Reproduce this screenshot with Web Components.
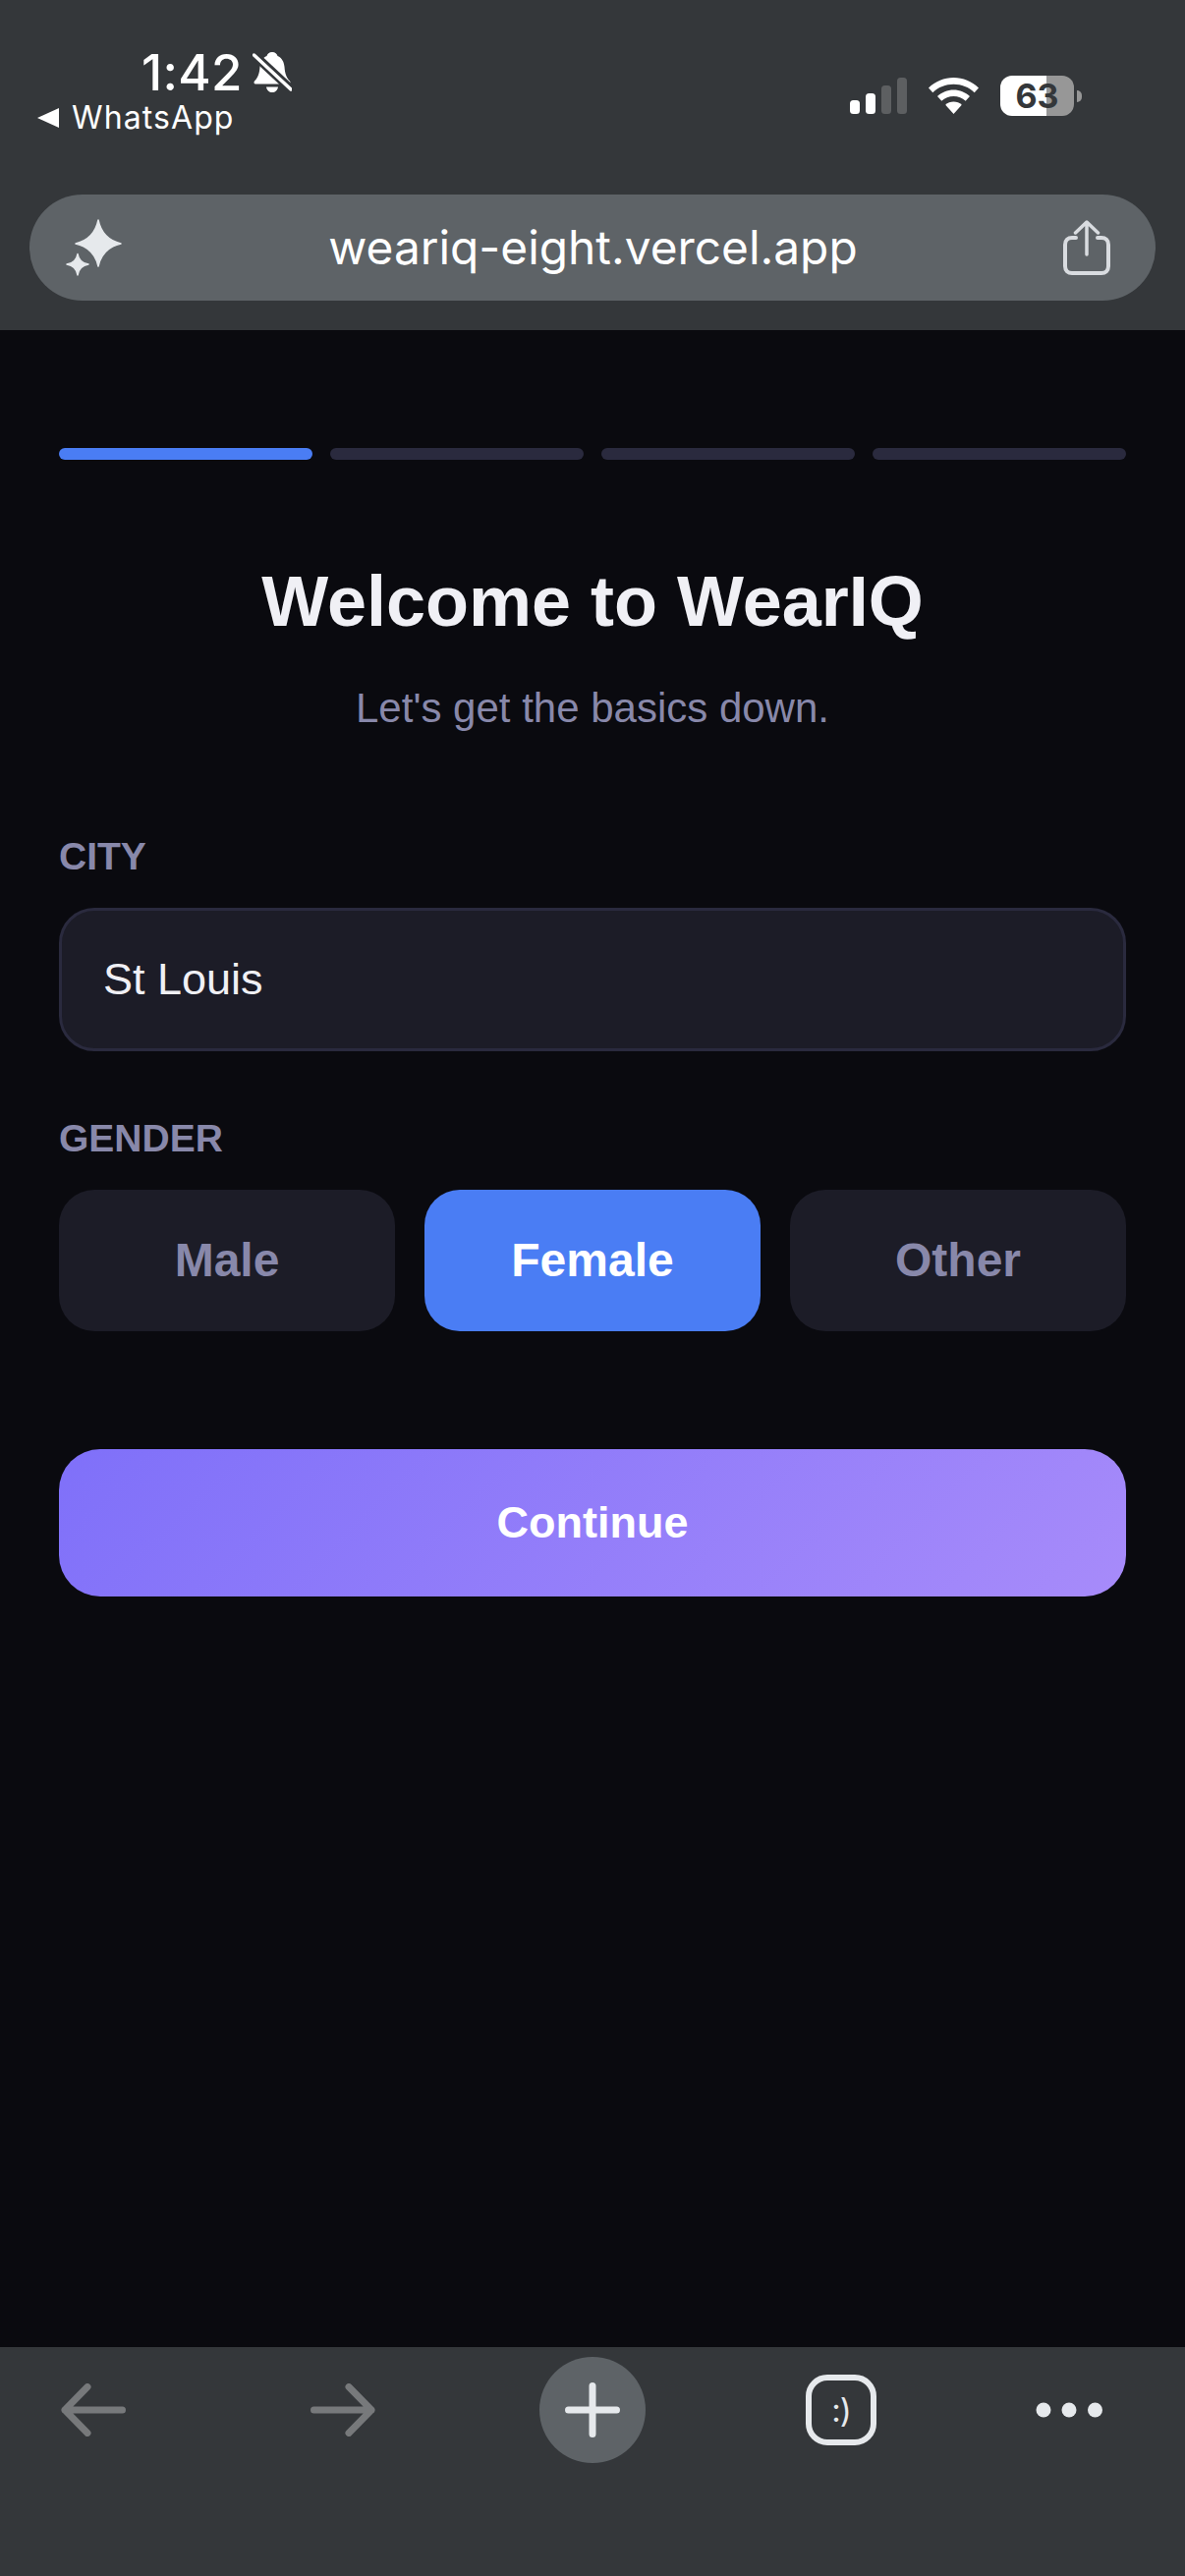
<!DOCTYPE html>
<html lang="en">
<head>
<meta charset="utf-8">
<title>WearIQ</title>
<style>
    html, body { margin: 0; background: #0a0a0f; }
    body { width: 1206px; height: 2622px; overflow: hidden; display: flex; flex-direction: column; font-family: "Liberation Sans", Arial, sans-serif; }
    main-page { flex: 1; }
</style>
</head>
<body>
<status-bar></status-bar>
<url-bar>weariq-eight.vercel.app</url-bar>
<main-page>
    <step-progress></step-progress>
    <page-heading subtitle="Let's get the basics down.">Welcome to WearIQ</page-heading>
    <form-field label="CITY"><text-box>St Louis</text-box></form-field>
    <form-field label="GENDER">
        <choice-row>
            <choice-button>Male</choice-button>
            <choice-button selected>Female</choice-button>
            <choice-button>Other</choice-button>
        </choice-row>
    </form-field>
    <primary-button>Continue</primary-button>
</main-page>
<browser-toolbar></browser-toolbar>
<script>
/**
 * Register a custom element with its markup and styles in an open shadow root.
 *
 * @param {string} name - Element name.
 * @param {string} styleText - Contents of the shadow root's style tag.
 * @param {string|function(HTMLElement): string} templateHtml - Markup, or a function of the host.
 */
function component(name, styleText, templateHtml) {
    customElements.define(name, class extends HTMLElement {
        constructor() {
            super();
            this.attachShadow({ mode: 'open' });
        }
        connectedCallback() {
            const html = typeof templateHtml === 'function' ? templateHtml(this) : templateHtml;
            this.shadowRoot.innerHTML = `<style>${styleText}</style>${html}`;
        }
    });
}

component('status-bar', `
    :host { display: flex; justify-content: space-between; height: 198px; background: #34373a; color: #fff; font-family: Inter, "Liberation Sans", sans-serif; }
    .left { padding: 45px 0 0 38px; }
    .time { display: flex; align-items: center; gap: 10px; padding-left: 106px; height: 58px; font-size: 51px; font-weight: 500; letter-spacing: .3px; line-height: 58px; }
    .app { display: flex; align-items: center; gap: 13px; height: 34px; font-size: 32px; letter-spacing: 1.1px; line-height: 34px; }
    .right { display: flex; align-items: center; gap: 22px; height: 41px; padding: 77px 105px 0 0; }
    svg { display: block; }
    .battery { display: flex; align-items: center; gap: 3px; }
    .cell { width: 75px; height: 41px; border-radius: 12px; background: linear-gradient(90deg, #fff 47px, #979797 47px); color: #34373a; font-size: 34px; font-weight: 700; line-height: 41px; text-align: center; }
    .nub { width: 5px; height: 12px; border-radius: 0 6px 6px 0; background: #979797; }
`, `
    <div class="left">
        <div class="time">1:42
            <svg width="40" height="42" viewBox="0 0 40 42" fill="#fff">
                <path d="M20 0c3 0 5 2 5.500 4 4.500 2 6.500 6 7 11 .5 7 2 11 5.500 14.500 1 1.500.5 3-1 3H3c-1.500 0-2-1.500-1-3 3.500-3.500 5-7.500 5.500-14.500.5-5 2.500-9 7-11C15 2 17 0 20 0z"/>
                <path d="M14 35.500h12c-.5 3.500-3 5.500-6 5.500s-5.500-2-6-5.500z"/>
                <path d="M-2 -.500 41 39.500" stroke="#34373a" stroke-width="9" fill="none"/>
                <path d="M1.500 3 39 38" stroke="#fff" stroke-width="3.500" stroke-linecap="round" fill="none"/>
            </svg>
        </div>
        <div class="app">
            <svg width="22" height="20" viewBox="0 0 22 20" fill="#fff"><path d="M0 10 22 0v20z"/></svg>
            <span>WhatsApp</span>
        </div>
    </div>
    <div class="right">
        <svg width="58" height="37" viewBox="0 0 58 37">
            <rect x="0" y="23" width="10" height="14" rx="3.500" fill="#fff"/>
            <rect x="16" y="16" width="10" height="21" rx="3.500" fill="#fff"/>
            <rect x="32" y="8" width="10" height="29" rx="3.500" fill="#5d5f61"/>
            <rect x="48" y="0" width="10" height="37" rx="3.500" fill="#5d5f61"/>
        </svg>
        <svg width="51" height="37" viewBox="0 0 51 37" fill="#fff">
            <path d="M25.500 0C35 0 44 3.800 51 10.500l-4.300 4.700C41 9.800 33.500 6.800 25.500 6.800S10 9.800 4.300 15.200L0 10.500C7 3.800 16 0 25.500 0z"/>
            <path d="M25.500 12.500c6.300 0 12 2.400 16.500 6.500l-4.300 4.700c-3.300-3-7.600-4.700-12.200-4.700s-8.900 1.700-12.200 4.700L9 19c4.500-4.100 10.200-6.500 16.500-6.500z"/>
            <path d="M25.500 24.500c3.200 0 6.100 1.200 8.300 3.200L25.500 37l-8.300-9.300c2.200-2 5.100-3.200 8.300-3.200z"/>
        </svg>
        <div class="battery"><div class="cell">63</div><div class="nub"></div></div>
    </div>
`);

component('url-bar', `
    :host { display: block; background: #34373a; padding: 0 30px 30px; }
    .pill { display: flex; align-items: center; justify-content: space-between; height: 108px; padding: 0 46px 0 37px; border-radius: 54px; background: #5e6367; }
    .url { color: #fff; font-family: Inter, "Liberation Sans", sans-serif; font-size: 47.8px; line-height: 108px; }
    svg { display: block; }
`, `
    <div class="pill">
        <svg width="58" height="58" viewBox="0 0 58 58" fill="#e6e9ec" stroke="#e6e9ec" stroke-width="1.500" stroke-linejoin="round">
            <path d="M33 1Q37 20.500 56 25 37 29.500 33 48 29 29.500 10 25 29 20.500 33 1z"/>
            <path d="M12 35.500Q13.500 44.500 23 46 13.500 47.500 12 57 10.500 47.500 1 46 10.500 44.500 12 35.500z"/>
        </svg>
        <span class="url"><slot></slot></span>
        <svg width="48" height="56" viewBox="0 0 48 56" fill="none" stroke="#d9dce0" stroke-linecap="round" stroke-linejoin="round">
            <path d="M13 18H9c-4 0-7 2.500-7 7v22c0 4.500 3 7 7 7h30c4 0 7-2.500 7-7V25c0-4.500-3-7-7-7h-4" stroke-width="4"/>
            <path d="M24 35V3M12.500 13 24 2l11.500 11" stroke-width="3.500"/>
        </svg>
    </div>
`);

component('step-progress', `
    :host { display: flex; gap: 18px; padding: 120px 60px 0; }
    i { flex: 1; height: 12px; border-radius: 6px; background: #2a2a3e; }
    i.on { background: #4a7df4; }
`, `<i class="on"></i><i></i><i></i><i></i>`);

component('page-heading', `
    :host { display: block; padding: 102px 0 38px; text-align: center; }
    h1 { margin: 0; color: #f0f0f5; font-size: 72px; font-weight: 700; line-height: 84px; }
    p { margin: 43px 0 0; color: #8888aa; font-size: 42px; line-height: 48px; }
`, el => `<h1><slot></slot></h1><p>${el.getAttribute('subtitle')}</p>`);

component('form-field', `
    :host { display: block; padding: 66px 60px 0; }
    label { display: block; margin-bottom: 30px; color: #8888aa; font-size: 39px; font-weight: 700; line-height: 45px; }
`, el => `<label>${el.getAttribute('label')}</label><slot></slot>`);

component('text-box', `
    :host { display: block; box-sizing: border-box; height: 146px; padding: 0 42px; border: 3px solid #2a2a3e; border-radius: 36px; background: #1c1c27; color: #f0f0f5; font-size: 45px; line-height: 140px; }
`, `<slot></slot>`);

component('choice-row', `
    :host { display: grid; grid-template-columns: repeat(3, 1fr); gap: 30px; }
`, `<slot></slot>`);

component('choice-button', `
    :host { display: block; height: 144px; border-radius: 36px; background: #1c1c27; color: #8888aa; font-size: 48px; font-weight: 700; line-height: 144px; text-align: center; }
    :host([selected]) { background: #4a7df4; color: #fff; }
`, `<slot></slot>`);

component('primary-button', `
    :host { display: block; height: 150px; margin: 120px 60px 0; border-radius: 42px; background: linear-gradient(135deg, #7f70f9, #a78bfa); color: #fff; font-size: 45px; font-weight: 700; line-height: 150px; text-align: center; }
`, `<slot></slot>`);

component('browser-toolbar', `
    :host { display: flex; align-items: center; box-sizing: border-box; height: 233px; padding: 10px 0 115px 62px; background: #34373a; }
    svg { display: block; flex: none; }
    .slot { display: flex; flex: none; align-items: center; justify-content: center; }
    .fwd { margin-left: 188px; }
    .plus { width: 108px; height: 108px; margin-left: 167px; border-radius: 50%; background: #5e6367; }
    .tab { box-sizing: border-box; width: 72px; height: 72px; margin-left: 163px; border: 6px solid #e6e9ec; border-radius: 22px; color: #e6e9ec; font-family: Inter, "Liberation Sans", sans-serif; font-size: 33px; letter-spacing: -1px; line-height: 1; }
    .more { margin-left: 162px; }
`, `
    <svg width="66" height="54" viewBox="0 0 66 54" fill="none" stroke="#77797b" stroke-width="7" stroke-linecap="round" stroke-linejoin="round"><path d="M62.500 27H4M27 3.500 4 27l23 23.500"/></svg>
    <svg class="fwd" width="66" height="54" viewBox="0 0 66 54" fill="none" stroke="#77797b" stroke-width="7" stroke-linecap="round" stroke-linejoin="round"><path d="M3.500 27H62M39 3.500 62 27 39 50.500"/></svg>
    <div class="slot plus"><svg width="56" height="56" viewBox="0 0 56 56" stroke="#e6e9ec" stroke-width="7" stroke-linecap="round"><path d="M3.500 28h49M28 3.500v49"/></svg></div>
    <div class="slot tab">:)</div>
    <svg class="more" width="68" height="16" viewBox="0 0 68 16" fill="#e6e9ec"><circle cx="8" cy="8" r="7.500"/><circle cx="34" cy="8" r="7.500"/><circle cx="60.500" cy="8" r="7.500"/></svg>
`);

component('main-page', `:host { display: block; }`, `<slot></slot>`);
</script>
</body>
</html>
